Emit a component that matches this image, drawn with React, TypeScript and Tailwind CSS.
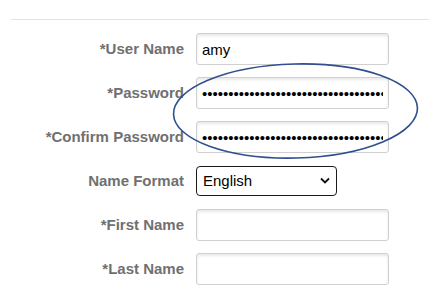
import { useState } from "react";

interface Field {
  label: string;
  name: string;
  type: "text" | "password" | "select";
  value?: string;
}

const fields: Field[] = [
  { label: "*User Name", name: "userName", type: "text", value: "amy" },
  { label: "*Password", name: "password", type: "password", value: "abcdefghijklmnopqrstuvwxyz123456789" },
  { label: "*Confirm Password", name: "confirmPassword", type: "password", value: "abcdefghijklmnopqrstuvwxyz123456789" },
  { label: "Name Format", name: "nameFormat", type: "select", value: "english" },
  { label: "*First Name", name: "firstName", type: "text" },
  { label: "*Last Name", name: "lastName", type: "text" },
];

const inputClass =
  "h-[32px] w-[193px] rounded-[3px] border border-[#d0d0d0] bg-white px-[5px] text-[15px] text-black shadow-[inset_0_2px_3px_rgba(0,0,0,0.09)] outline-none";

export default function App() {
  const [values, setValues] = useState<Record<string, string>>(
    Object.fromEntries(fields.map((f) => [f.name, f.value ?? ""]))
  );

  return (
    <div className="relative h-[287px] w-[446px] overflow-hidden bg-white font-['Liberation_Sans',Arial,sans-serif]">
      <div className="px-[11px] pt-[19px]">
        <div className="h-[1px] w-[418px] bg-[#e2e2e2]" />
      </div>

      <form className="mt-[13px] flex flex-col gap-[12px]">
        {fields.map((field) => (
          <div key={field.name} className="flex h-[32px] items-center">
            <label
              htmlFor={field.name}
              className="w-[184px] text-right text-[15px] font-bold text-[#707070]"
            >
              {field.label}
            </label>
            <div className="ml-[12px]">
              {field.type === "select" ? (
                <div className="relative">
                  <select
                    id={field.name}
                    value={values[field.name]}
                    onChange={(e) => setValues({ ...values, [field.name]: e.target.value })}
                    className="h-[30px] w-[141px] appearance-none rounded-[4px] border-[1.5px] border-[#1a1a1a] bg-white pl-[6px] text-[15px] text-black outline-none"
                  >
                    <option value="english">English</option>
                    <option value="chinese">Chinese</option>
                  </select>
                  <svg
                    className="pointer-events-none absolute right-[7px] top-[11px]"
                    width="10"
                    height="7"
                    viewBox="0 0 10 7"
                  >
                    <path d="M1 1.5 L5 5.5 L9 1.5" fill="none" stroke="#111" strokeWidth="1.8" />
                  </svg>
                </div>
              ) : (
                <input
                  id={field.name}
                  name={field.name}
                  type={field.type}
                  value={values[field.name]}
                  onChange={(e) => setValues({ ...values, [field.name]: e.target.value })}
                  className={inputClass}
                />
              )}
            </div>
          </div>
        ))}
      </form>

      {/* highlight drawn over the password fields */}
      <svg
        className="pointer-events-none absolute left-0 top-0"
        width="446"
        height="287"
        viewBox="0 0 446 287"
      >
        <ellipse
          cx="295.5"
          cy="111"
          rx="122"
          ry="47"
          fill="none"
          stroke="#2f4f8f"
          strokeWidth="1.6"
          transform="rotate(-1.5 295.5 111)"
        />
      </svg>
    </div>
  );
}
